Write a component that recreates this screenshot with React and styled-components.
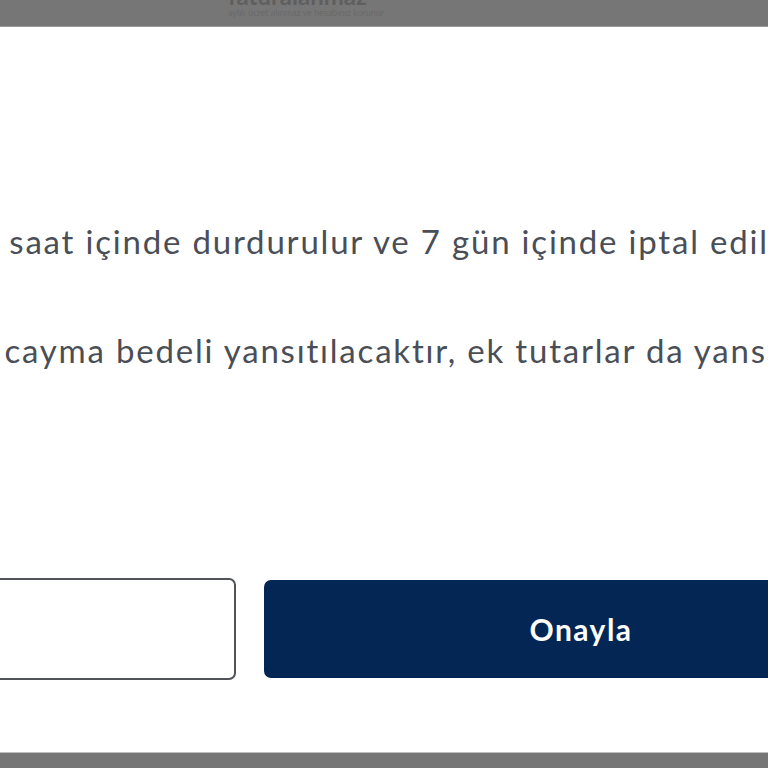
import React from 'react'
import styled, { createGlobalStyle } from 'styled-components'

const GlobalStyle = createGlobalStyle`
  html, body {
    margin: 0;
    padding: 0;
    overflow: hidden;
    background: #767676;
  }
  * { box-sizing: border-box; }
`

function App() {
    return (
        <Page>
            <GlobalStyle />
            <Backdrop>
                <BackTitle>faturalanmaz</BackTitle>
                <BackSub>aylık ücret alınmaz ve hesabınız korunur</BackSub>
            </Backdrop>
            <Modal>
                <Inner>
                    <Message>
                        <Line shift={146}>Aboneliğiniz 24 saat içinde durdurulur ve 7 gün içinde iptal edilir.</Line>
                        <Line shift={197}>Bu durumda cayma bedeli yansıtılacaktır, ek tutarlar da yansıtılabilir.</Line>
                    </Message>
                    <Actions>
                        <Button>Vazgeç</Button>
                        <Button primary>Onayla</Button>
                    </Actions>
                </Inner>
            </Modal>
            <Footer />
        </Page>
    )
}

export default App

const Page = styled.div`
height: 100vh;
display: flex;
flex-direction: column;
overflow: hidden;
font-family: Lato, "Noto Sans", sans-serif;
`

const Backdrop = styled.div`
height: 27px;
flex-shrink: 0;
background: #767676;
border-bottom: 1px solid #9a9a9a;
padding-left: 228px;
overflow: hidden;
`

const BackTitle = styled.div`
margin-top: -16px;
font-size: 24px;
font-weight: 700;
color: #5f5f5f;
line-height: 24px;
`

const BackSub = styled.div`
font-size: 9px;
color: #6a6a6a;
line-height: 10px;
`

const Modal = styled.div`
flex: 1;
background: #ffffff;
overflow: hidden;
`

const Inner = styled.div`
width: 1296px;
margin-left: -398px;
display: flex;
flex-direction: column;
`

const Message = styled.div`
padding-top: 194px;
display: flex;
flex-direction: column;
gap: 69px;
`

const Line = styled.p`
margin: 0 0 0 ${p => p.shift}px;
white-space: nowrap;
font-size: 33px;
letter-spacing: 1.8px;
line-height: 40px;
color: #4a4e57;
`

const Actions = styled.div`
margin-top: 208px;
display: grid;
grid-template-columns: 1fr 1fr;
gap: 28px;
`

const Button = styled.button`
height: ${p => (p.primary ? '98px' : '102px')};
margin-top: ${p => (p.primary ? '2px' : '0')};
border-radius: 7px;
border: ${p => (p.primary ? 'none' : '2px solid #505459')};
background: ${p => (p.primary ? '#032654' : '#ffffff')};
color: ${p => (p.primary ? '#ffffff' : '#032654')};
font-family: Lato, "Noto Sans", sans-serif;
font-size: 30px;
letter-spacing: 1.5px;
font-weight: 700;
`

const Footer = styled.div`
height: 16px;
flex-shrink: 0;
background: #767676;
border-top: 1px solid #bdbdbd;
`
